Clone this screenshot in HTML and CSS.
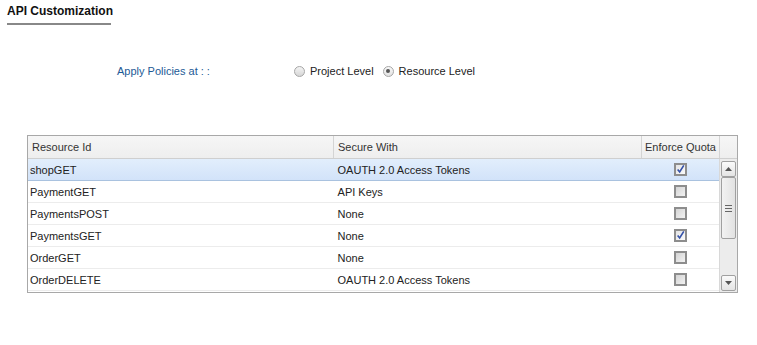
FILE: index.html
```html
<!DOCTYPE html>
<html>
<head>
<meta charset="utf-8">
<link rel="stylesheet" href="styles.css">
</head>
<body>
<div class="page">
  <div class="tabbar"><div class="tab">API Customization</div></div>
  <div class="policy">
    <div class="label">Apply Policies at : :</div>
    <div class="radios">
      <span class="radio"></span><span class="rtext">Project Level</span>
      <span class="radio on"></span><span class="rtext">Resource Level</span>
    </div>
  </div>
  <div class="grid">
    <div class="head">
      <div class="hc c1">Resource Id</div>
      <div class="hc c2">Secure With</div>
      <div class="hc c3">Enforce Quota</div>
      <div class="hc c4"></div>
    </div>
    <div class="bodywrap">
      <div class="rows">
        <div class="row sel"><div class="c1">shopGET</div><div class="c2">OAUTH 2.0 Access Tokens</div><div class="c3"><span class="cb checked"><svg width="11" height="11" viewBox="0 0 11 11"><path d="M2 5.5 L4.5 8.5 L9.5 0.5" fill="none" stroke="#3350a8" stroke-width="2"/></svg></span></div></div>
        <div class="row"><div class="c1">PaymentGET</div><div class="c2">API Keys</div><div class="c3"><span class="cb"></span></div></div>
        <div class="row"><div class="c1">PaymentsPOST</div><div class="c2">None</div><div class="c3"><span class="cb"></span></div></div>
        <div class="row"><div class="c1">PaymentsGET</div><div class="c2">None</div><div class="c3"><span class="cb checked"><svg width="11" height="11" viewBox="0 0 11 11"><path d="M2 5.5 L4.5 8.5 L9.5 0.5" fill="none" stroke="#3350a8" stroke-width="2"/></svg></span></div></div>
        <div class="row"><div class="c1">OrderGET</div><div class="c2">None</div><div class="c3"><span class="cb"></span></div></div>
        <div class="row"><div class="c1">OrderDELETE</div><div class="c2">OAUTH 2.0 Access Tokens</div><div class="c3"><span class="cb"></span></div></div>
      </div>
      <div class="scroll">
        <div class="sbtn"><svg width="7" height="4" viewBox="0 0 7 4"><path d="M0 4 L3.5 0 L7 4Z" fill="#555"/></svg></div>
        <div class="thumb"><div class="grip"></div></div>
        <div class="track"></div>
        <div class="sbtn"><svg width="7" height="4" viewBox="0 0 7 4"><path d="M0 0 L7 0 L3.5 4Z" fill="#555"/></svg></div>
      </div>
    </div>
  </div>
</div>
</body>
</html>
```
FILE: styles.css
```css
html, body { margin: 0; padding: 0; background: #fff; }
body { font-family: Arial, "Liberation Sans", sans-serif; font-size: 11px; color: #222; }
.page { width: 757px; height: 345px; }
.tabbar { padding: 4px 0 0 7px; }
.tab { display: inline-block; white-space: nowrap; font-weight: bold; font-size: 12px; line-height: 14px; color: #111; padding: 0 0 5px 0; width: 104px; border-bottom: 2px solid #888; }
.policy { display: flex; margin-top: 38px; height: 16px; align-items: center; }
.label { width: 177px; padding-left: 117px; color: #1d5a96; }
.radios { display: flex; align-items: center; }
.radio { width: 11px; height: 11px; border-radius: 50%; border: 1px solid #a6a6a6; background: linear-gradient(#f4f4f4, #d6d6d6); box-sizing: border-box; margin-right: 5px; position: relative; }
.radio.on { background: linear-gradient(#f8f8f8, #e2e2e2); }
.radio.on::after { content: ""; position: absolute; left: 2.5px; top: 2.5px; width: 4px; height: 4px; border-radius: 50%; background: #555; }
.rtext { margin-right: 9px; }
.grid { margin: 56px 0 0 27px; width: 711px; border: 1px solid #a8a8a8; box-sizing: border-box; }
.head { display: flex; height: 22px; background: linear-gradient(#f6f6f6, #eeeeee); border-bottom: 1px solid #cfcfcf; }
.hc { line-height: 22px; padding-left: 4px; box-sizing: border-box; border-right: 1px solid #d4d4d4; color: #333; }
.c1 { width: 306px; }
.c2 { width: 308px; }
.c3 { width: 78px; }
.c4 { flex: 1; border-right: none; }
.head .c3 { padding-left: 3px; }
.bodywrap { display: flex; height: 133px; }
.rows { width: 691px; }
.row { display: flex; height: 22px; align-items: center; border-bottom: 1px solid #ececec; box-sizing: border-box; }
.row > div { padding-left: 2px; box-sizing: border-box; }
.row .c2 { padding-left: 4px; }
.row .c3 { display: flex; justify-content: center; padding-left: 0; }
.row.sel { background: linear-gradient(#e2eefc, #d2e3f9); border-bottom: 1px solid #a9c2df; }
.cb { width: 13px; height: 13px; box-sizing: border-box; border: 2px solid #8d8d8d; background: linear-gradient(135deg, #d4d4d4, #f2f2f2); display: flex; align-items: center; justify-content: center; }
.cb.checked { background: linear-gradient(135deg, #e4e4e4, #fafafa); }
.cb svg { display: block; }
.scroll { flex: 1; display: flex; flex-direction: column; background: #ececec; border-left: 1px solid #d8d8d8; padding: 2px 1px 1px 1px; }
.sbtn { height: 14px; border: 1px solid #a0a0a0; border-radius: 2px; background: linear-gradient(#fafafa, #e4e4e4); display: flex; align-items: center; justify-content: center; }
.thumb { height: 60px; border: 1px solid #a0a0a0; border-radius: 2px; background: linear-gradient(90deg, #f2f2f2, #e2e2e2); display: flex; align-items: center; justify-content: center; }
.grip { width: 7px; height: 5px; border-top: 1px solid #666; border-bottom: 1px solid #666; position: relative; }
.grip::after { content: ""; position: absolute; left: 0; right: 0; top: 2px; height: 1px; background: #666; }
.track { flex: 1; }
```
